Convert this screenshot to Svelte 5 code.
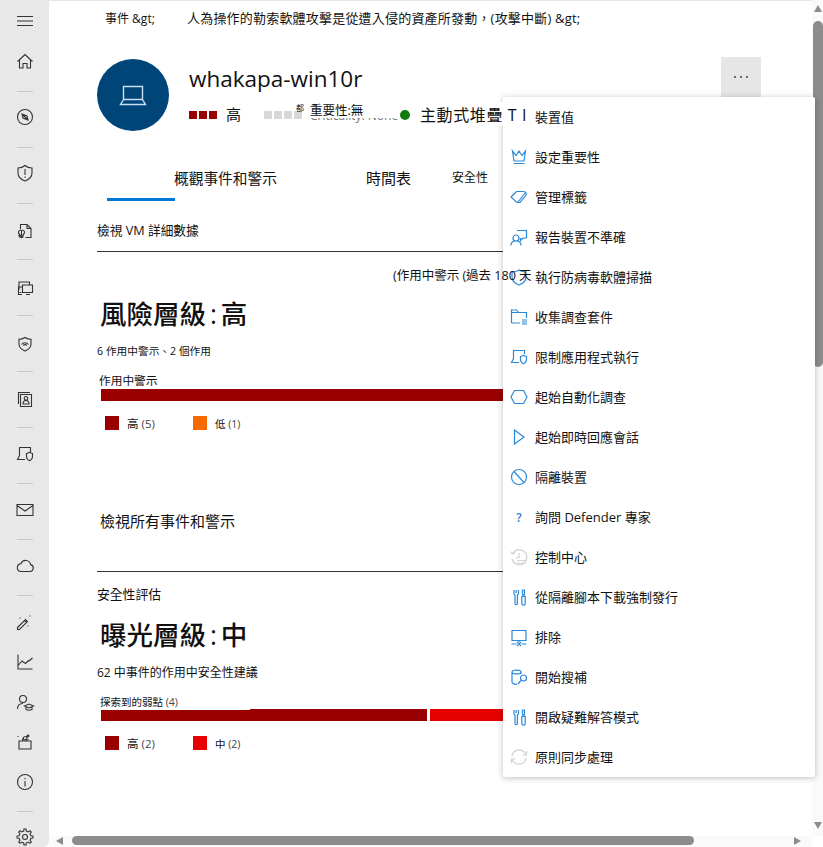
<script>
  // gear outline, built once so the teeth stay even
  function gearPath(cx, cy, outer, inner, teeth) {
    let d = '';
    const step = (Math.PI * 2) / teeth;
    for (let i = 0; i < teeth; i++) {
      const a = i * step;
      const pts = [
        [inner, a - step * 0.5],
        [inner, a - step * 0.28],
        [outer, a - step * 0.16],
        [outer, a + step * 0.16],
        [inner, a + step * 0.28]
      ];
      for (const [r, t] of pts) {
        const x = (cx + r * Math.cos(t)).toFixed(2);
        const y = (cy + r * Math.sin(t)).toFixed(2);
        d += (d ? 'L' : 'M') + x + ' ' + y;
      }
    }
    return d + 'Z';
  }

  const navGroups = [
    ['M2 5.500h16M2 10h16M2 14.500h16', 'M2.500 10.500 10 3.500l7.500 7M4.500 9v8H8v-4.500h4V17h3.500V9'],
    ['M17.500 10a7.500 7.500 0 1 1-15 0 7.500 7.500 0 0 1 15 0ZM7 7l5 2 1 4-5-2ZM7 7l6 6'],
    ['M10 2.500c-2 1.800-4.500 2.500-7 2.500v5c0 3.800 3 6.500 7 8 4-1.500 7-4.200 7-8V5c-2.500 0-5-.7-7-2.500ZM10 6v6M10 13.500v1.200'],
    ['M5.500 8V3.500H12L16 7.500V16.500H10.500M12 3.500v4h4M6.500 9.500a2 2 0 0 1 2 3.500 2 2 0 1 1-4 0 2 2 0 0 1 2-3.500ZM4.500 13a2.200 2.200 0 0 0 4 2.500 2.200 2.200 0 0 1-4-2.500ZM6.500 9.500v7'],
    ['M4 12V4h10.500v2.500M7.500 7h10v7.500h-10ZM3 9h4M3.500 9v7.500H7M11 16.500h4M4.500 14.500h2'],
    ['M10 3.500c-1.800 1.200-4 1.800-6 1.800v5c0 3.200 2.500 5.200 6 6.700 3.500-1.500 6-3.500 6-6.700v-5c-2 0-4.200-.6-6-1.800ZM6.500 10.500c2-2.400 5-2.400 7 0M8.200 11.500c1-1.200 2.600-1.200 3.600 0'],
    ['M3.500 15V3.500H15M5.500 5.500h11v12h-11ZM8 15c0-2.500 1.200-3.500 3-3.500s3 1 3 3.500ZM9.200 9.300a1.800 1.800 0 1 0 3.600 0 1.800 1.800 0 0 0-3.600 0Z'],
    ['M4.500 11.500V3.500h11V8M4.500 11.500 2.500 15.500H10M11.500 9.500c1-.2 2-.6 3-1.200 1 .6 2 1 3 1.200v3c0 2-1.200 3.400-3 4.200-1.800-.8-3-2.200-3-4.200Z'],
    ['M2 4.500h16v11H2ZM2 5.500 10 11l8-5.500'],
    ['M5.500 15.500H15a3.500 3.500 0 0 0 .6-6.900A5 5 0 0 0 6 7.600a4 4 0 0 0-.5 7.900Z'],
    [
      'M2.500 15.500 10.500 7.500l2 2-8 8H2.500ZM9.500 8.500l2 2M5 5.500v1M15 3.500v1M13 13.500v1',
      'M3 2.500V17h14.500M3 13.500 7 9l3.500 2.500 3-3 .5.500 3.500-3',
      'M4.500 7a3.500 3.500 0 1 0 7 0 3.500 3.500 0 0 0-7 0ZM2.500 17c0-3.500 2-5.500 5.500-5.500M9.500 14l4.500-2 4.500 2-4.500 2ZM11 15v2.500c2 1 4 1 6 0V15',
      'M4 9h12v8H4ZM7.500 9c0-2.500 1-4.500 3-4.500s2 2.500 0 3-2.500 0-2-2M11 9c.5-1 1.500-1.500 2.500-1.500M3 4v1M13 3l1 1-1 1-1-1Z',
      'M17.500 10a7.500 7.500 0 1 1-15 0 7.500 7.500 0 0 1 15 0ZM10 9v5.500M10 6v1.200'
    ],
    [gearPath(10, 10, 8, 6, 8) + 'M12.500 10a2.500 2.500 0 1 1-5 0 2.500 2.500 0 0 1 5 0Z']
  ];

  // the rail icons sit a little low against their separators in the middle of the column
  const navNudge = [0, 0, 0, 2, 3, 3, 2, 1, 1, 1, 1, 0];

  const tools = 'M5 3v3.500a1.800 1.800 0 0 0 1 1.500v8.500a1.200 1.200 0 0 0 2.400 0V8A1.800 1.800 0 0 0 9.500 6.500V3M7.200 3v3M13.500 3h2v5h-2ZM14.500 8v1M12.800 9.500h3.400v7a1.700 1.700 0 0 1-3.400 0Z';

  const menuItems = [
    { label: '裝置值' },
    { label: '設定重要性', icon: 'M3.500 4 5 14h10l1.500-10L13 8.500 10 4 7 8.500ZM4.500 16.500h11' },
    { label: '管理標籤', icon: 'M2 10 7.500 4.500h7c2.500 0 3.500 2.500 2 4.500L11 15.500H8ZM9 15l7-9' },
    { label: '報告裝置不準確', icon: 'M8 3.500h9.500V11H14l-2.500 2.500V11M7 8a3 3 0 1 0 0 6 3 3 0 0 0 0-6ZM2 18.500c0-3 2-4.500 5-4.500s5 1.500 5 4.500' },
    { label: '執行防病毒軟體掃描', icon: 'M10 3c-2 1.500-4.500 2-7 2v5c0 3.800 3 6.500 7 8 4-1.500 7-4.200 7-8V5c-2.500 0-5-.5-7-2Z' },
    { label: '收集調查套件', icon: 'M2.500 16V3h5l2 2.500h8V11M2.500 5.500h7M2.500 16H11M13 13h5M13 15h5M13 17h5' },
    { label: '限制應用程式執行', icon: 'M4.500 11.500V3.500h11V7M4.500 11.500 2.500 15.500H10M11.500 9.500c1-.2 2-.6 3-1.200 1 .6 2 1 3 1.200v3c0 2-1.200 3.400-3 4.200-1.800-.8-3-2.200-3-4.200Z' },
    { label: '起始自動化調查', icon: 'M5.500 3.500h9L18 10l-3.500 6.500h-9L2 10Z' },
    { label: '起始即時回應會話', icon: 'M5.500 3 15 10l-9.500 7Z' },
    { label: '隔離裝置', icon: 'M17.500 10a7.500 7.500 0 1 1-15 0 7.500 7.500 0 0 1 15 0ZM5 4.500l10 11' },
    { label: '詢問 Defender 專家', glyph: '?' },
    { label: '控制中心', muted: true, icon: 'M3.500 7a7.500 7.500 0 1 1-.5 5M1.500 4.500 3.500 7l2.500-1.500M10 6v5M7 11h3M8 13.500h10M8 16h9' },
    { label: '從隔離腳本下載強制發行', icon: tools },
    { label: '排除', icon: 'M3 3.500h14v10H3ZM2.500 17h5M12.500 17h5M8 15l4 4M12 15l-4 4M10 13.500V15' },
    { label: '開始搜補', icon: 'M3 5c0-2.500 9-2.500 9 0s-9 2.500-9 0ZM3 5v10c0 1.500 2 2.300 5 2.300M12 5v2M17.500 11a3 3 0 1 1-6 0 3 3 0 0 1 6 0ZM12.300 13 9 17' },
    { label: '開啟疑難解答模式', icon: tools },
    { label: '原則同步處理', muted: true, icon: 'M3 9a7.200 7.200 0 0 1 13-3l1.500 2M17.500 4v4h-4M17 11a7.200 7.200 0 0 1-13 3l-1.500-2M2.500 16v-4h4' }
  ];
</script>

<div class="page">
  <nav class="rail">
    {#each navGroups as group, g}
      {#if g > 0}<span class="sep"></span>{/if}
      {#each group as d, i}
        <span class="nav-item" class:first={g === 0 && i === 0}>
          <svg viewBox="0 0 20 20" width="20" height="20" style="transform: translateY({navNudge[g]}px)"><path {d} /></svg>
        </span>
      {/each}
    {/each}
  </nav>

  <main class="content">
    <div class="crumbs">
      <span class="crumb-a">事件 &amp;gt;</span>
      <span>人為操作的勒索軟體攻擊是從遭入侵的資產所發動，(攻擊中斷) &amp;gt;</span>
    </div>

    <header class="device">
      <div class="avatar">
        <svg viewBox="0 0 32 32" width="32" height="32">
          <path d="M6.500 7.500h19v13h-19ZM6.500 20.500 3.500 25.500h25l-3-5" />
        </svg>
      </div>
      <div class="device-text">
        <h1>whakapa-win10r</h1>
        <div class="meta">
          <span class="squares">
            <i class="high"></i><i class="high"></i><i class="high"></i>
          </span>
          <span class="risk">高</span>
          <span class="squares pale"><i></i><i></i><i></i><i></i></span>
          <span class="frag">都</span>
          <span class="crit">
            <span class="crit-under">Criticality: None</span>
            <span class="crit-over">重要性:無</span>
          </span>
          <span class="dot"></span>
          <span class="onboard">主動式堆疊 T I</span>
        </div>
      </div>
      <button class="more" aria-label="更多">
        <svg viewBox="0 0 20 6" width="20" height="6"><circle cx="4" cy="3" r="1" /><circle cx="10" cy="3" r="1" /><circle cx="16" cy="3" r="1" /></svg>
      </button>
    </header>

    <div class="tabs">
      <span class="tab-main">概觀事件和警示</span>
      <span class="tab-time">時間表</span>
      <span class="tab-sec">安全性</span>
    </div>
    <div class="tab-line"></div>

    <div class="vm-link">檢視 VM 詳細數據</div>
    <hr />

    <div class="range">(作用中警示 (過去 180 天</div>

    <h2 class="level">風險層級 : 高</h2>
    <p class="count">6 作用中警示、2 個作用</p>
    <div class="bar-label">作用中警示</div>
    <div class="bar"><span class="high grow"></span></div>
    <div class="legend">
      <span class="swatch high"></span><span class="lg-a">高 <em>(5)</em></span>
      <span class="swatch low"></span><span class="lg-b">低 <em>(1)</em></span>
    </div>

    <div class="all-link">檢視所有事件和警示</div>
    <hr class="rule-b" />

    <div class="assess">安全性評估</div>
    <h2 class="level level-b">曝光層級 : 中</h2>
    <p class="recs">62 中事件的作用中安全性建議</p>
    <div class="vuln-label">探索到的弱點 <em>(4)</em></div>
    <div class="bar bar-b">
      <span class="high split"></span><span class="gap"></span><span class="med grow"></span>
    </div>
    <div class="legend">
      <span class="swatch high"></span><span class="lg-a">高 <em>(2)</em></span>
      <span class="swatch med"></span><span class="lg-b">中 <em>(2)</em></span>
    </div>
  </main>

  <div class="vscroll">
    <span class="arrow up"></span>
    <span class="vthumb"></span>
    <span class="arrow down"></span>
  </div>

  <div class="hscroll">
    <span class="arrow left"></span>
    <span class="hthumb"></span>
    <span class="arrow right"></span>
  </div>
  <div class="corner"></div>

  <ul class="menu">
    {#each menuItems as item}
      <li>
        <span class="menu-icon" class:muted={item.muted}>
          {#if item.icon}
            <svg viewBox="0 0 20 20" width="20" height="20"><path d={item.icon} /></svg>
          {:else if item.glyph}
            <span class="glyph">{item.glyph}</span>
          {/if}
        </span>
        <span class="menu-label">{item.label}</span>
      </li>
    {/each}
  </ul>
</div>

<style>
  :global(body) {
    margin: 0;
    background: #fff;
  }

  .page {
    position: relative;
    display: grid;
    grid-template-columns: 49px 1fr 11px;
    grid-template-rows: 836px 11px;
    width: 823px;
    height: 847px;
    overflow: hidden;
    color: #111;
    font-family: "Open Sans", "Noto Sans CJK TC", sans-serif;
    font-size: 13px;
  }

  /* left rail */
  .rail {
    grid-row: 1 / 3;
    display: flex;
    flex-direction: column;
    align-items: center;
    background: #e8e8e8;
    border-bottom-right-radius: 6px;
  }

  .nav-item {
    display: flex;
    align-items: center;
    justify-content: center;
    flex: none;
    height: 40px;
  }

  .nav-item.first {
    margin-top: 1px;
  }

  .nav-item svg path {
    fill: none;
    stroke: #333;
    stroke-width: 1.1;
  }

  .sep {
    flex: none;
    width: 16px;
    height: 1px;
    margin: 10px 0 5px;
    background: #c8c8c8;
  }

  /* main column */
  .content {
    min-width: 0;
    overflow: hidden;
    padding-left: 48px;
    border-top: 1px solid #e6e6e6;
    box-sizing: border-box;
  }

  .crumbs {
    display: flex;
    align-items: center;
    height: 33px;
    padding-left: 9px;
    font-size: 13px;
    letter-spacing: 0.2px;
    white-space: nowrap;
  }

  .crumb-a {
    width: 81px;
    flex: none;
    font-size: 12px;
    letter-spacing: 0;
    margin-left: -1px;
    margin-right: 1px;
  }

  .device {
    display: flex;
    margin-top: 25px;
    height: 72px;
  }

  .avatar {
    display: flex;
    align-items: center;
    justify-content: center;
    flex: none;
    width: 72px;
    height: 72px;
    border-radius: 50%;
    background: #004578;
  }

  .avatar path {
    fill: none;
    stroke: #c7e0f4;
    stroke-width: 1.4;
  }

  .device-text {
    margin-left: 20px;
    width: 532px;
    flex: none;
  }

  h1 {
    margin: 4px 0 0;
    font-size: 22.500px;
    font-weight: 400;
    line-height: 32px;
    white-space: nowrap;
  }

  .meta {
    display: flex;
    align-items: center;
    height: 24px;
    margin-top: 8px;
    white-space: nowrap;
  }

  .squares {
    display: flex;
    gap: 2px;
    flex: none;
  }

  .squares i {
    width: 8px;
    height: 8px;
    background: #d8d8d8;
  }

  .squares i.high {
    background: #9b0000;
  }

  .risk {
    margin: -3px 0 0 9px;
    font-size: 15px;
    width: 38px;
    flex: none;
  }

  .frag {
    margin: -16px 0 0 -6px;
    width: 14px;
    flex: none;
    font-size: 8px;
    position: relative;
  }

  .crit {
    display: grid;
    width: 90px;
    height: 24px;
    flex: none;
  }

  .crit > span {
    grid-area: 1 / 1;
  }

  .crit-under {
    padding-top: 4px;
    color: #777;
    font-size: 12px;
    line-height: 18px;
  }

  .crit-over {
    height: 15px;
    background: #fff;
    font-size: 12.500px;
    line-height: 16px;
    position: relative;
  }

  .dot {
    width: 10px;
    height: 10px;
    flex: none;
    border-radius: 50%;
    background: #107c10;
  }

  .onboard {
    position: relative;
    z-index: 3;
    margin: -3px 0 0 10px;
    background: #fff;
    font-size: 16px;
    letter-spacing: 0.6px;
  }

  .more {
    display: flex;
    align-items: center;
    justify-content: center;
    flex: none;
    width: 40px;
    height: 40px;
    margin: -2px 0 0 0;
    padding: 0;
    border: 0;
    background: #e6e6e6;
  }

  .more circle {
    fill: #444;
  }

  .tabs {
    display: flex;
    align-items: center;
    height: 40px;
    margin-top: 27px;
    padding: 0 0 2px 77px;
    box-sizing: border-box;
    white-space: nowrap;
  }

  .tab-main {
    width: 192px;
    flex: none;
    font-size: 14.700px;
  }

  .tab-time {
    width: 86px;
    flex: none;
    font-size: 15px;
  }

  .tab-sec {
    font-size: 12px;
  }

  .tab-line {
    width: 68px;
    height: 3px;
    margin-left: 10px;
    background: #0078d4;
  }

  .vm-link {
    margin-top: 20px;
    height: 18px;
    line-height: 18px;
    font-size: 12.700px;
  }

  hr {
    height: 1px;
    margin: 12px 0 0;
    border: 0;
    background: #333;
  }

  .range {
    position: relative;
    z-index: 3;
    width: max-content;
    margin: 15px 0 0 296px;
    height: 18px;
    line-height: 18px;
    font-size: 12.500px;
    white-space: nowrap;
  }

  .level {
    margin: 11px 0 0 3px;
    height: 36px;
    line-height: 36px;
    font-size: 26.500px;
    font-weight: 500;
    word-spacing: -3px;
    white-space: nowrap;
  }

  .count {
    margin: 11px 0 0;
    height: 16px;
    line-height: 16px;
    font-size: 10.700px;
  }

  .bar-label {
    margin: 13px 0 0 2px;
    height: 16px;
    line-height: 16px;
    font-size: 11.700px;
  }

  .bar {
    display: flex;
    height: 12px;
    margin: 1px 0 0 4px;
  }

  .high {
    background: #9b0000;
  }

  .low {
    background: #f76a00;
  }

  .med {
    background: #e60000;
  }

  .grow {
    flex: 1;
  }

  .split {
    width: 326px;
    flex: none;
  }

  .gap {
    width: 3px;
    flex: none;
  }

  .legend {
    display: flex;
    align-items: center;
    height: 14px;
    margin: 15px 0 0 8px;
    font-size: 11.500px;
  }

  .swatch {
    width: 14px;
    height: 14px;
    flex: none;
  }

  .lg-a {
    width: 66px;
    margin-left: 8px;
    flex: none;
  }

  .lg-b {
    margin-left: 8px;
    font-size: 10.500px;
  }

  em {
    font-style: normal;
    color: #444;
  }

  .all-link {
    margin: 80px 0 0 3px;
    height: 22px;
    line-height: 22px;
    font-size: 15px;
  }

  .rule-b {
    margin-top: 39px;
  }

  .assess {
    margin-top: 13px;
    height: 18px;
    line-height: 18px;
    font-size: 12.800px;
  }

  .level-b {
    margin-top: 14px;
  }

  .recs {
    margin: 11px 0 0;
    height: 18px;
    line-height: 18px;
    font-size: 12px;
  }

  .vuln-label {
    position: relative;
    width: 150px;
    height: 16px;
    margin: 12px 0 -1px 3px;
    background: #fff;
    line-height: 16px;
    font-size: 10.500px;
    white-space: nowrap;
  }

  .bar-b {
    margin-top: 0;
  }

  /* fake scrollbars */
  .vscroll {
    position: relative;
    display: flex;
    flex-direction: column;
    align-items: center;
    background: #fafafa;
    padding: 5px 0 7px;
    box-sizing: border-box;
  }

  .vthumb {
    width: 10px;
    height: 346px;
    margin-top: 9px;
    border-radius: 5px;
    background: #8c8c8c;
  }

  .arrow {
    width: 0;
    height: 0;
    flex: none;
    border-style: solid;
    border-color: transparent;
  }

  .up {
    border-width: 0 4.500px 7px;
    border-bottom-color: #8c8c8c;
  }

  .down {
    margin-top: auto;
    border-width: 7px 4.500px 0;
    border-top-color: #8c8c8c;
  }

  .hscroll {
    grid-column: 2;
    display: flex;
    align-items: center;
    height: 11px;
    padding: 0 11px 2px 7px;
    background: #fafafa;
    box-sizing: border-box;
  }

  .left {
    border-width: 4.500px 7px 4.500px 0;
    border-right-color: #8c8c8c;
  }

  .right {
    margin-left: auto;
    border-width: 4.500px 0 4.500px 7px;
    border-left-color: #8c8c8c;
  }

  .hthumb {
    width: 622px;
    height: 9px;
    margin-left: 9px;
    border-radius: 5px;
    background: #8c8c8c;
  }

  .corner {
    background: #fff;
  }

  /* overflow menu */
  .menu {
    position: absolute;
    left: 503px;
    top: 97px;
    z-index: 2;
    width: 312px;
    margin: 0;
    padding: 0;
    list-style: none;
    background: #fff;
    box-shadow: 0 1px 6px rgba(0, 0, 0, 0.25);
    border-radius: 2px;
  }

  .menu li {
    display: flex;
    align-items: center;
    height: 40px;
    white-space: nowrap;
    font-size: 13px;
  }

  .menu-label {
    margin-top: -2px;
  }

  .menu-icon {
    display: flex;
    align-items: center;
    justify-content: center;
    flex: none;
    width: 20px;
    height: 20px;
    margin: 0 6px;
  }

  .menu-icon path {
    fill: none;
    stroke: #2b88d8;
    stroke-width: 1.200;
  }

  .menu-icon.muted path {
    stroke: #d2d2d2;
  }

  .glyph {
    color: #2b88d8;
    font-size: 12px;
    font-weight: 600;
  }
</style>
